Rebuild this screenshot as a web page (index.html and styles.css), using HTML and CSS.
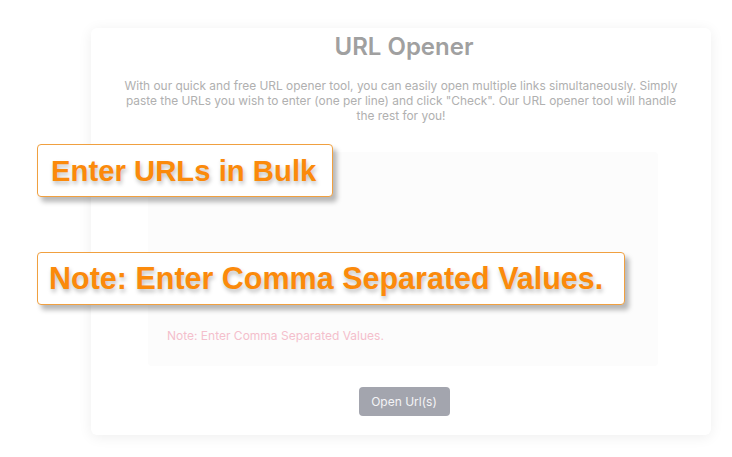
FILE: index.html
```html
<!DOCTYPE html>
<html>
<head>
<meta charset="utf-8">
<link rel="stylesheet" href="styles.css">
</head>
<body>
<div class="stage">
  <div class="card">
    <h1 class="title">URL Opener</h1>
    <p class="desc">With our quick and free URL opener tool, you can easily open multiple links simultaneously. Simply paste the URLs you wish to enter (one per line) and click "Check". Our URL opener tool will handle the rest for you!</p>
    <div class="inputbox">
      <div class="note">Note: Enter Comma Separated Values.</div>
    </div>
    <div class="actions">
      <button class="btn">Open Url(s)</button>
    </div>
  </div>
  <div class="callout callout-bulk">Enter URLs in Bulk</div>
  <div class="callout callout-note">Note: Enter Comma Separated Values.</div>
</div>
</body>
</html>
```
FILE: styles.css
```css
html, body {
  margin: 0;
  padding: 0;
  background: #ffffff;
}
.stage {
  position: relative;
  width: 732px;
  height: 457px;
  padding: 28px 0 0 91px;
  box-sizing: border-box;
  font-family: Inter, "Noto Sans", sans-serif;
}
.card {
  width: 620px;
  height: 407px;
  background: #ffffff;
  border-radius: 6px;
  box-shadow: 0 2px 14px rgba(0,0,0,0.07);
  display: flex;
  flex-direction: column;
  align-items: center;
  box-sizing: border-box;
  padding: 4px 0 0 0;
}
.title {
  margin: 0;
  font-size: 24px;
  font-weight: 600;
  color: #a0a0a0;
  line-height: 30px;
  transform: translateX(3px);
}
.desc {
  margin: 16px 0 0 0;
  width: 570px;
  text-align: center;
  font-size: 11.9px;
  line-height: 15px;
  color: #b0b0b0;
}
.inputbox {
  margin-top: 29px;
  width: 510px;
  height: 214px;
  background: #fcfcfc;
  border-radius: 4px;
  box-sizing: border-box;
  padding: 177px 0 0 19px;
  transform: translateX(2px);
}
.note {
  font-size: 12px;
  color: #f4bfcc;
  line-height: 14px;
}
.actions {
  margin-top: 21px;
}
.btn {
  border: none;
  background: #a3a5ae;
  color: #f4f4f6;
  font-family: Inter, "Noto Sans", sans-serif;
  font-size: 12px;
  width: 91px;
  height: 29px;
  border-radius: 4px;
  transform: translateX(3px);
}
.callout {
  position: absolute;
  left: 37px;
  background: #ffffff;
  border: 1px solid #f0a040;
  border-radius: 4px;
  box-sizing: border-box;
  height: 53px;
  padding: 0 0 0 11px;
  display: flex;
  align-items: center;
  font-family: "Liberation Sans", Arial, sans-serif;
  font-weight: 700;
  font-size: 30.5px;
  color: #fb8a0b;
  text-shadow: 1px 3px 4px rgba(0,0,0,0.25);
  box-shadow: 4px 5px 5px rgba(0,0,0,0.28);
  white-space: nowrap;
}
.callout-bulk {
  top: 144px;
  width: 296px;
  font-size: 29.3px;
  padding-left: 13px;
}
.callout-note {
  top: 252px;
  width: 588px;
}
```
